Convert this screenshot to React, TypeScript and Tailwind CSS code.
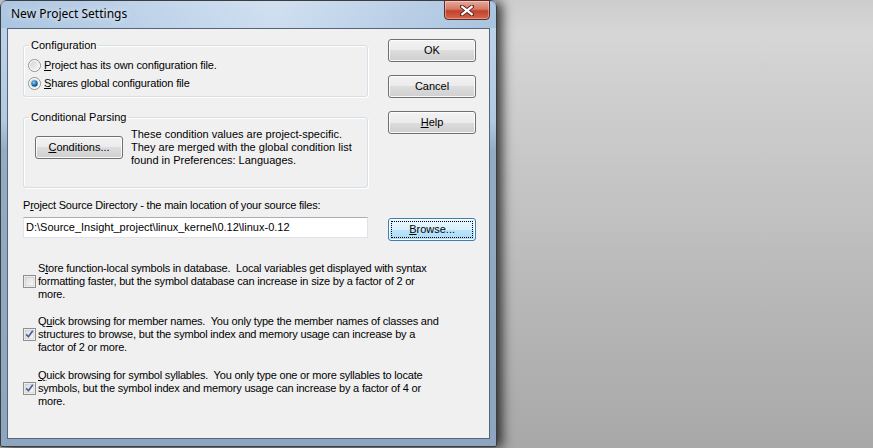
import React from 'react';

const ui = { fontFamily: '"Liberation Sans", Arial, sans-serif' };

const WinButton: React.FC<{ children: React.ReactNode; focused?: boolean; className?: string }> = ({
  children,
  focused = false,
  className = '',
}) => {
  return (
    <div
      className={`relative flex h-[23px] w-[88px] items-center justify-center rounded-[3px] border text-[11px] text-black shadow-[inset_0_0_0_1px_rgba(255,255,255,0.85)] ${
        focused
          ? 'border-[#3c7fb1] bg-[linear-gradient(to_bottom,#eaf6fd_0%,#d9f0fc_50%,#bee6fd_50%,#a7d9f5_100%)]'
          : 'border-[#707070] bg-[linear-gradient(to_bottom,#f2f2f2_0%,#ebebeb_50%,#dddddd_50%,#cfcfcf_100%)]'
      } ${className}`}
    >
      {focused && <div className="absolute inset-[2px] border border-dotted border-black" />}
      <span className="relative">{children}</span>
    </div>
  );
};

const Radio: React.FC<{ checked?: boolean }> = ({ checked = false }) => (
  <svg width="13" height="13" viewBox="0 0 13 13" className="shrink-0">
    <defs>
      <linearGradient id="rfill" x1="0" y1="0" x2="1" y2="1">
        <stop offset="0" stopColor="#d4d4d4" />
        <stop offset="1" stopColor="#f6f6f6" />
      </linearGradient>
      <radialGradient id="rdot" cx="0.4" cy="0.35" r="0.7">
        <stop offset="0" stopColor="#8fd3f8" />
        <stop offset="0.5" stopColor="#2a7fc0" />
        <stop offset="1" stopColor="#0d3e6a" />
      </radialGradient>
    </defs>
    <circle cx="6.5" cy="6.5" r="6" fill="#fff" stroke="#8e8f8f" />
    <circle cx="6.5" cy="6.5" r="4.5" fill="url(#rfill)" />
    {checked && <circle cx="6.5" cy="6.5" r="3.2" fill="url(#rdot)" />}
  </svg>
);

const Check: React.FC<{ checked?: boolean }> = ({ checked = false }) => (
  <svg width="13" height="13" viewBox="0 0 13 13" className="shrink-0">
    <defs>
      <linearGradient id="cfill" x1="0" y1="0" x2="1" y2="1">
        <stop offset="0" stopColor="#dcdcdc" />
        <stop offset="1" stopColor="#f8f8f8" />
      </linearGradient>
    </defs>
    <rect x="0.5" y="0.5" width="12" height="12" fill="#fff" stroke="#8e8f8f" />
    <rect x="2" y="2" width="9" height="9" fill="url(#cfill)" stroke="#b8b8b8" strokeWidth="0.6" />
    {checked && (
      <path d="M3.2 6.4 L5.4 8.8 L9.8 2.8" fill="none" stroke="#4a5f97" strokeWidth="1.7" strokeLinejoin="round" />
    )}
  </svg>
);

const GroupBox: React.FC<{ label: string; className?: string; children: React.ReactNode }> = ({
  label,
  className = '',
  children,
}) => (
  <fieldset
    className={`rounded-[3px] border border-[#d5dfe5] shadow-[inset_1px_1px_0_#ffffff,1px_1px_0_#ffffff] ${className}`}
  >
    <legend className="ml-[5px] px-[2px] text-[11px] leading-[13px]">{label}</legend>
    {children}
  </fieldset>
);

const Option: React.FC<{ checked?: boolean; lines: React.ReactNode[]; className?: string }> = ({
  checked = false,
  lines,
  className = '',
}) => (
  <div className={`flex items-center gap-[2px] ${className}`}>
    <Check checked={checked} />
    <div className="text-[11px] leading-[13px] tracking-[-0.2px]">
      {lines.map((l, i) => (
        <div key={i} className="whitespace-pre">
          {l}
        </div>
      ))}
    </div>
  </div>
);

export default function App() {
  return (
    <div
      style={ui}
      className="flex h-[448px] w-[873px] overflow-hidden bg-[linear-gradient(to_bottom,#cdcdcd_0px,#d6d6d6_32px,#c6c6c6_170px,#b4b4b4_330px,#a8a8a8_448px)] text-black"
    >
      {/* dialog window */}
      <div className="flex h-[447px] w-[497px] shrink-0 flex-col rounded-t-[7px] rounded-b-[2px] border border-[#3a3d42] bg-[linear-gradient(to_bottom,#c2d6ec_0px,#bcd2ea_28px,#b2c9e3_120px,#93abc5_150px,#8ea5bf_447px)] shadow-[5px_1px_12px_rgba(0,0,0,0.75)]">
        {/* title bar */}
        <div className="flex h-[27px] items-start bg-[linear-gradient(to_right,rgba(160,188,218,0.6),rgba(255,255,255,0.25)_55%,rgba(150,180,212,0.5))]">
          <div
            className="pl-[10px] pt-[5px] text-[12px] leading-[16px] text-black [text-shadow:0_0_6px_rgba(255,255,255,0.9)]"
            style={{ fontFamily: '"Noto Sans", "Open Sans", sans-serif' }}
          >
            New Project Settings
          </div>
          <div className="flex-1" />
          <div className="mr-[6px] mt-[-1px] flex h-[20px] w-[46px] items-center justify-center rounded-b-[4px] border border-[#5a2b25] bg-[linear-gradient(to_bottom,#e9a99b_0%,#d47866_45%,#c2422b_55%,#d5664e_100%)] shadow-[inset_0_0_0_1px_rgba(255,255,255,0.35)]">
            <svg width="14" height="11" viewBox="0 0 14 11">
              <path d="M2 1.5 L12 9.5 M12 1.5 L2 9.5" stroke="#5a2420" strokeWidth="4" strokeLinecap="square" />
              <path d="M2.3 1.8 L11.7 9.2 M11.7 1.8 L2.3 9.2" stroke="#ffffff" strokeWidth="2.2" strokeLinecap="square" />
            </svg>
          </div>
        </div>

        {/* client area */}
        <div className="mx-[6px] flex h-[411px] flex-col border border-[#56657a] bg-[#f0f0f0] pl-[15px] pr-[13px] pt-[10px]">
          <div className="flex gap-[20px]">
            <div className="flex w-[346px] flex-col">
              <GroupBox label="Configuration" className="h-[58px]">
                <div className="flex flex-col pl-[4px] pt-[4px] text-[11px] tracking-[-0.15px]">
                  <div className="flex h-[18px] items-center gap-[3px]">
                    <Radio />
                    <span>
                      <u>P</u>roject has its own configuration file.
                    </span>
                  </div>
                  <div className="flex h-[18px] items-center gap-[3px]">
                    <Radio checked />
                    <span>
                      <u>S</u>hares global configuration file
                    </span>
                  </div>
                </div>
              </GroupBox>
              <GroupBox label="Conditional Parsing" className="mt-[14px] h-[77px]">
                <div className="flex items-center gap-[8px] pl-[11px] pt-[4px]">
                  <WinButton>
                    <u>C</u>onditions...
                  </WinButton>
                  <div className="text-[11px] leading-[13px]">
                    <div>These condition values are project-specific.</div>
                    <div>They are merged with the global condition list</div>
                    <div>found in Preferences: Languages.</div>
                  </div>
                </div>
              </GroupBox>
            </div>
            <div className="flex w-[88px] flex-col gap-[13px]">
              <WinButton>OK</WinButton>
              <WinButton>Cancel</WinButton>
              <WinButton>
                <u>H</u>elp
              </WinButton>
            </div>
          </div>

          <div className="mt-[11px] text-[11px] leading-[13px] tracking-[-0.2px]">
            P<u>r</u>oject Source Directory - the main location of your source files:
          </div>
          <div className="mt-[5px] flex items-start gap-[20px]">
            <div className="flex h-[21px] w-[346px] items-center border border-[#e2e3ea] border-t-[#abadb3] bg-white pl-[2px] text-[11px]">
              D:\Source_Insight_project\linux_kernel\0.12\linux-0.12
            </div>
            <WinButton focused className="mt-[1px] h-[22px]">
              <u>B</u>rowse...
            </WinButton>
          </div>

          <Option
            className="mt-[21px]"
            lines={[
              <>
                S<u>t</u>ore function-local symbols in database.  Local variables get displayed with syntax
              </>,
              'formatting faster, but the symbol database can increase in size by a factor of 2 or',
              'more.',
            ]}
          />
          <Option
            checked
            className="mt-[14px]"
            lines={[
              <>
                Q<u>u</u>ick browsing for member names.  You only type the member names of classes and
              </>,
              'structures to browse, but the symbol index and memory usage can increase by a',
              'factor of 2 or more.',
            ]}
          />
          <Option
            checked
            className="mt-[15px]"
            lines={[
              <>
                <u>Q</u>uick browsing for symbol syllables.  You only type one or more syllables to locate
              </>,
              'symbols, but the symbol index and memory usage can increase by a factor of 4 or',
              'more.',
            ]}
          />
        </div>
      </div>
      <div className="flex-1" />
    </div>
  );
}
